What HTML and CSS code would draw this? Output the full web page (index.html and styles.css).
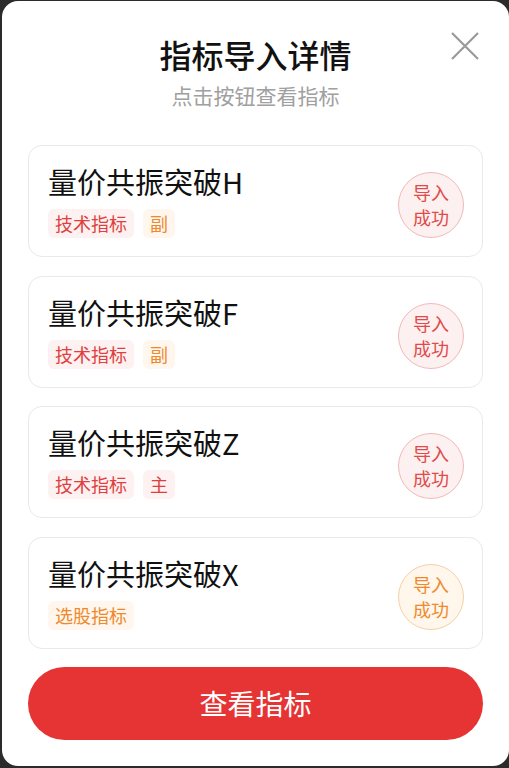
FILE: index.html
```html
<!DOCTYPE html>
<html lang="zh-CN">
<head>
    <meta charset="UTF-8">
    <meta name="viewport" content="width=device-width, initial-scale=1.0">
    <title>指标导入详情</title>
    <link rel="stylesheet" href="styles.css">
</head>
<body>
    <div class="modal">
        <!-- En-tête -->
        <div class="modal-header">
            <h1 class="modal-title">指标导入详情</h1>
            <p class="modal-subtitle">点击按钮查看指标</p>
            <button class="close-button" aria-label="关闭">
                <svg width="28" height="28" viewBox="0 0 28 28">
                    <path d="M1 1 L27 27 M27 1 L1 27" stroke="#9a9a9a" stroke-width="2.2" fill="none"/>
                </svg>
            </button>
        </div>

        <!-- Liste des indicateurs -->
        <div class="indicator-list">
            <div class="indicator-card">
                <div class="indicator-info">
                    <div class="indicator-name">量价共振突破H</div>
                    <div class="tags">
                        <span class="tag tag-red">技术指标</span>
                        <span class="tag tag-orange">副</span>
                    </div>
                </div>
                <div class="status status-red">导入<br>成功</div>
            </div>

            <div class="indicator-card">
                <div class="indicator-info">
                    <div class="indicator-name">量价共振突破F</div>
                    <div class="tags">
                        <span class="tag tag-red">技术指标</span>
                        <span class="tag tag-orange">副</span>
                    </div>
                </div>
                <div class="status status-red">导入<br>成功</div>
            </div>

            <div class="indicator-card">
                <div class="indicator-info">
                    <div class="indicator-name">量价共振突破Z</div>
                    <div class="tags">
                        <span class="tag tag-red">技术指标</span>
                        <span class="tag tag-red">主</span>
                    </div>
                </div>
                <div class="status status-red">导入<br>成功</div>
            </div>

            <div class="indicator-card">
                <div class="indicator-info">
                    <div class="indicator-name">量价共振突破X</div>
                    <div class="tags">
                        <span class="tag tag-orange">选股指标</span>
                    </div>
                </div>
                <div class="status status-orange">导入<br>成功</div>
            </div>
        </div>

        <button class="view-button">查看指标</button>
    </div>
</body>
</html>
```

FILE: styles.css
```css
body {
    margin: 0;
    font-family: "Noto Sans CJK SC", "Noto Sans", sans-serif;
    background-color: #2b2b2b;
    color: #111;
    overflow: hidden;
}

.modal {
    margin: 1px 0 0 2px;
    width: 507px;
    height: 765px;
    box-sizing: border-box;
    background: #fff;
    border-radius: 16px;
    padding: 31px 26px 0 26px;
    display: flex;
    flex-direction: column;
}

.modal-header {
    position: relative;
    text-align: center;
}

.modal-title {
    margin: 0;
    font-size: 32px;
    line-height: 44px;
    font-weight: 500;
    color: #111;
}

.modal-subtitle {
    margin: 5px 0 0 0;
    font-size: 21px;
    line-height: 28px;
    color: #a0a0a0;
}

.close-button {
    position: absolute;
    top: 0;
    right: 4px;
    padding: 0;
    border: none;
    background: none;
    cursor: pointer;
}

.indicator-list {
    margin-top: 36px;
    display: flex;
    flex-direction: column;
    gap: 18.5px;
}

.indicator-card {
    height: 112px;
    box-sizing: border-box;
    border: 1px solid #e9e9e9;
    border-radius: 14px;
    padding: 15px 18px 0 19px;
    display: flex;
    justify-content: space-between;
    align-items: flex-start;
}

.indicator-name {
    font-size: 29px;
    line-height: 40px;
    color: #111;
}

.tags {
    margin-top: 8px;
    display: flex;
    gap: 9px;
}

.tag {
    height: 29px;
    line-height: 29px;
    padding: 0 7px;
    border-radius: 6px;
    font-size: 18px;
}

.tag-red {
    background-color: #fdf1f1;
    color: #e0403d;
}

.tag-orange {
    background-color: #fff6ee;
    color: #ee8a2c;
}

.status {
    margin-top: 11px;
    width: 66px;
    height: 66px;
    box-sizing: border-box;
    border-radius: 50%;
    display: flex;
    align-items: center;
    justify-content: center;
    text-align: center;
    font-size: 18px;
    line-height: 25px;
}

.status-red {
    background-color: #fdf0f0;
    border: 1px solid #f0b9b9;
    color: #e04a48;
}

.status-orange {
    background-color: #fff6ec;
    border: 1px solid #f5d0a8;
    color: #ee8a2c;
}

.view-button {
    margin-top: 18px;
    height: 73px;
    border: none;
    border-radius: 37px;
    background-color: #e63333;
    color: #fff;
    font-family: inherit;
    font-size: 28px;
    cursor: pointer;
}
```
